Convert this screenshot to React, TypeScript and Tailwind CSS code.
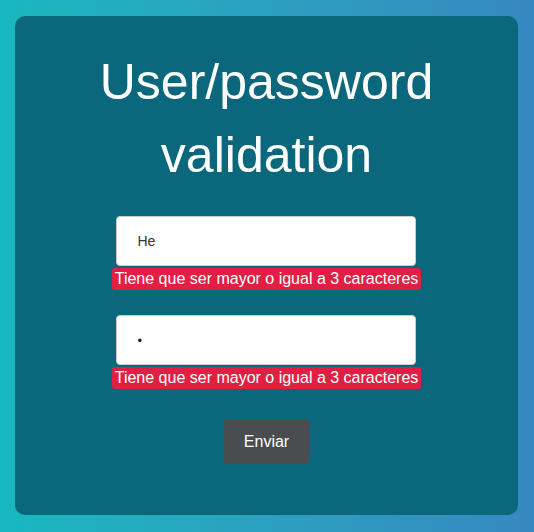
export default function App() {
  return (
    <div className="w-[534px] h-[532px] bg-gradient-to-r from-[#18b8bf] to-[#3688c0] pt-[16px] pl-[15px]" style={{ fontFamily: '"Liberation Sans", Arial, sans-serif' }}>
      <div className="w-[503px] h-[499px] bg-[#0b687c] rounded-[10px] flex flex-col items-center pt-[30px]">
        <h1 className="text-white text-[50px] leading-[73px] text-center w-[360px]">User/password validation</h1>
        <div className="mt-[24px] flex flex-col items-center">
          <input
            readOnly
            value="He"
            className="w-[300px] h-[50px] bg-white rounded-[4px] border border-[#ccc] pl-[21px] text-[14px] text-[#333] outline-none -translate-x-[1px]"
          />
          <span className="mt-[2px] bg-[#e11f45] text-white text-[16px] leading-[22px] px-[3px] rounded-[3px]">Tiene que ser mayor o igual a 3 caracteres</span>
        </div>
        <div className="mt-[25px] flex flex-col items-center">
          <input
            readOnly
            type="password"
            value="a"
            className="w-[300px] h-[50px] bg-white rounded-[4px] border border-[#ccc] pl-[21px] text-[13px] text-[#222] outline-none -translate-x-[1px]"
          />
          <span className="mt-[2px] bg-[#e11f45] text-white text-[16px] leading-[22px] px-[3px] rounded-[3px]">Tiene que ser mayor o igual a 3 caracteres</span>
        </div>
        <button className="mt-[30px] w-[85px] h-[45px] bg-[#4a4d50] text-white text-[16px] rounded-[4px]">Enviar</button>
      </div>
    </div>
  );
}
